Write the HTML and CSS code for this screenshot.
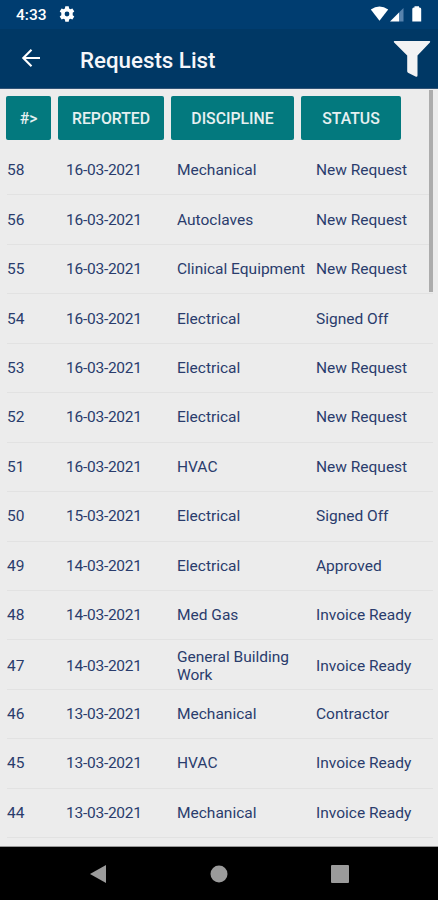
FILE: index.html
```html
<!DOCTYPE html>
<html lang="en">
<head>
  <meta charset="UTF-8" />
  <meta name="viewport" content="width=device-width, initial-scale=1.0" />
  <title>Requests List</title>
  <link rel="stylesheet" href="styles.css">
</head>
<body>
  <div class="status-bar">
    <span class="clock">4:33</span>
    <svg class="gear" width="16" height="16" viewBox="0 0 16 16">
      <path fill="#fff" fill-rule="evenodd" d="M6.300 0.300h3.400l.4 2.100 1.300.8 2-.8 1.900 3.100-1.600 1.300v2.400l1.600 1.300-1.900 3.100-2-.8-1.300.8-.4 2.100H6.300l-.4-2.100-1.300-.8-2 .8L.7 10.500l1.600-1.300V6.800L.7 5.500l1.900-3.100 2 .8 1.300-.8zM8 5.600a2.400 2.400 0 1 0 0 4.800a2.400 2.400 0 0 0 0-4.800z"/>
    </svg>
    <svg class="signals" width="54" height="18" viewBox="0 0 54 18">
      <path fill="#fff" d="M.8 4.600Q9.500-1.700 18.200 4.600L9.500 15.700z"/>
      <path fill="#fff" d="M20 16.500 29 7.500v9z"/>
      <path fill="#5883ad" d="M29 7.500 33.500 3v13.500H29z"/>
      <path fill="#fff" d="M42.300 4q0-1.500 1.500-1.500h.7V1.200h4.500v1.300h.7q1.500 0 1.500 1.500v12.500h-8.900z"/>
    </svg>
  </div>

  <header class="app-bar">
    <svg class="back" width="20" height="20" viewBox="0 0 20 20">
      <path d="M10.500 1.800 2.300 10l8.200 8.200M2.500 10H19" fill="none" stroke="#fff" stroke-width="2.100"/>
    </svg>
    <h1>Requests List</h1>
    <svg class="filter" width="38" height="38" viewBox="0 0 38 38">
      <path fill="#f3f3f4" d="M1.500 1h35q1 0 .6 1.200L24.500 15.500v20q0 1.500-1.500 1.200l-8-4q-.8-.6-.8-1.500V15.500L.9 2.200Q.5 1 1.500 1z"/>
    </svg>
  </header>

  <main class="content">
    <div class="buttons">
      <button type="button" class="btn-id">#&gt;</button>
      <button type="button" class="btn-reported">REPORTED</button>
      <button type="button" class="btn-discipline">DISCIPLINE</button>
      <button type="button" class="btn-status">STATUS</button>
    </div>

    <div class="list">
      <div class="row"><span>58</span><span class="date">16-03-2021</span><span>Mechanical</span><span>New Request</span></div>
      <div class="row"><span>56</span><span class="date">16-03-2021</span><span>Autoclaves</span><span>New Request</span></div>
      <div class="row"><span>55</span><span class="date">16-03-2021</span><span>Clinical Equipment</span><span>New Request</span></div>
      <div class="row"><span>54</span><span class="date">16-03-2021</span><span>Electrical</span><span>Signed Off</span></div>
      <div class="row"><span>53</span><span class="date">16-03-2021</span><span>Electrical</span><span>New Request</span></div>
      <div class="row"><span>52</span><span class="date">16-03-2021</span><span>Electrical</span><span>New Request</span></div>
      <div class="row"><span>51</span><span class="date">16-03-2021</span><span>HVAC</span><span>New Request</span></div>
      <div class="row"><span>50</span><span class="date">15-03-2021</span><span>Electrical</span><span>Signed Off</span></div>
      <div class="row"><span>49</span><span class="date">14-03-2021</span><span>Electrical</span><span>Approved</span></div>
      <div class="row"><span>48</span><span class="date">14-03-2021</span><span>Med Gas</span><span>Invoice Ready</span></div>
      <div class="row two-line"><span>47</span><span class="date">14-03-2021</span><span>General Building<br>Work</span><span>Invoice Ready</span></div>
      <div class="row"><span>46</span><span class="date">13-03-2021</span><span>Mechanical</span><span>Contractor</span></div>
      <div class="row"><span>45</span><span class="date">13-03-2021</span><span>HVAC</span><span>Invoice Ready</span></div>
      <div class="row"><span>44</span><span class="date">13-03-2021</span><span>Mechanical</span><span>Invoice Ready</span></div>
    </div>
    <div class="scrollbar"></div>
  </main>

  <nav class="nav-bar">
    <svg width="18" height="20" viewBox="0 0 18 20"><path fill="#9b9b9b" d="M17 1v18L1 10z"/></svg>
    <svg width="18" height="18" viewBox="0 0 18 18"><circle cx="9" cy="9" r="8.500" fill="#9b9b9b"/></svg>
    <svg width="18" height="18" viewBox="0 0 18 18"><rect width="18" height="18" rx="1" fill="#9b9b9b"/></svg>
  </nav>
</body>
</html>
```
FILE: styles.css
```css
* {
  box-sizing: border-box;
}
body {
  margin: 0;
  height: 900px;
  display: flex;
  flex-direction: column;
  overflow: hidden;
  font-family: Roboto, "Liberation Sans", sans-serif;
  background-color: #ececec;
}
.status-bar {
  height: 29px;
  display: flex;
  align-items: center;
  padding: 0 16px;
  background-color: #003d70;
  color: white;
}
.clock {
  font-size: 15.5px;
  font-weight: 500;
  width: 43px;
}
.gear {
  margin-top: -1px;
}
.signals {
  margin-left: auto;
  margin-right: -2px;
  margin-top: -1px;
}
.app-bar {
  height: 60px;
  display: flex;
  align-items: center;
  padding: 0 8px 0 21px;
  background-color: #003865;
  border-bottom: 1px solid #315477;
}
.back {
  margin-top: -2px;
}
.app-bar h1 {
  margin: 3px 0 0 39px;
  color: #f5f6fa;
  font-size: 22.3px;
  font-weight: 500;
  line-height: 28px;
}
.filter {
  margin-left: auto;
  margin-right: -1px;
}
.content {
  position: relative;
  height: 758px;
  border-bottom: 1px solid #999;
}
.buttons {
  display: flex;
  padding: 7px 0 0 6px;
}
button {
  height: 44px;
  padding: 0;
  border: none;
  border-radius: 2px;
  background-color: #03797e;
  color: #e6f0f1;
  font-family: inherit;
  font-size: 15.8px;
  font-weight: 500;
}
.btn-id {
  width: 45px;
  margin-right: 7px;
}
.btn-reported {
  width: 106px;
  margin-right: 7px;
}
.btn-discipline {
  width: 123px;
  margin-right: 7px;
}
.btn-status {
  width: 100px;
}
.list {
  padding: 6px 5px 0 7px;
}
.row {
  display: grid;
  grid-template-columns: 59px 111px 139px 1fr;
  align-items: center;
  height: 49.45px;
  border-bottom: 1px solid #e2e2e2;
  color: #2a3c6c;
  font-size: 15.5px;
  line-height: 18px;
  white-space: nowrap;
}
.date {
  letter-spacing: -0.25px;
}
.two-line {
  padding-top: 2px;
}
.scrollbar {
  position: absolute;
  top: 1px;
  right: 5px;
  width: 4px;
  height: 202px;
  background-color: #acacac;
}
.nav-bar {
  height: 53px;
  display: flex;
  align-items: center;
  justify-content: space-between;
  padding: 0 89px;
  background-color: #000;
}
```
